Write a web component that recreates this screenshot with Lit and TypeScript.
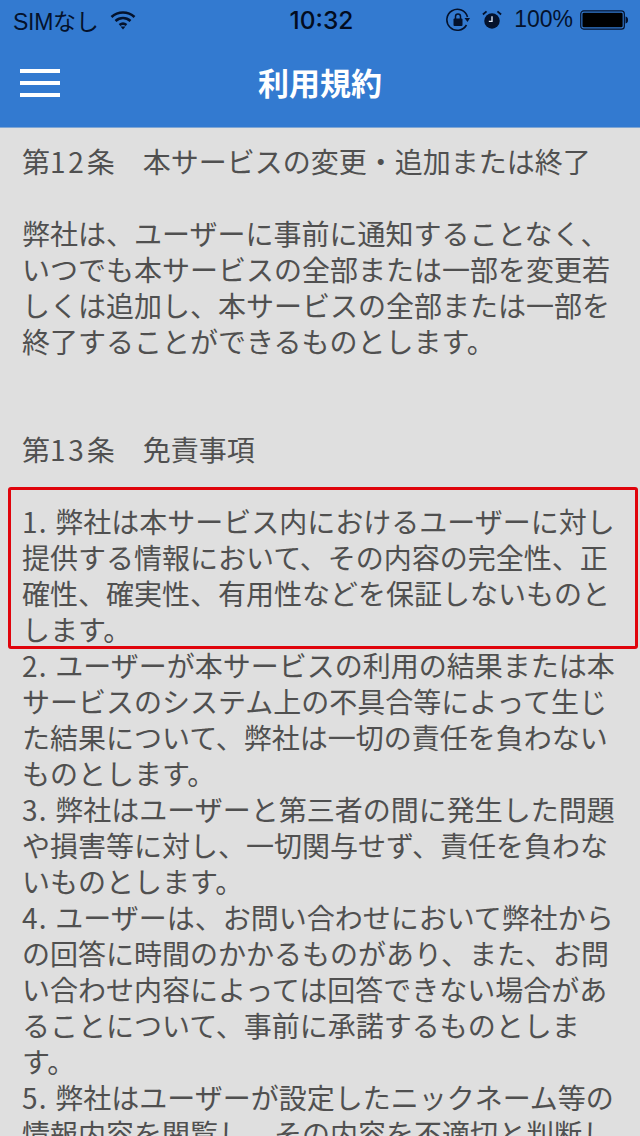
import { LitElement, html, css } from "lit";
import { customElement } from "lit/decorators.js";

const LINES = [
  "第12条　本サービスの変更・追加または終了",
  "",
  "弊社は、ユーザーに事前に通知することなく、",
  "いつでも本サービスの全部または一部を変更若",
  "しくは追加し、本サービスの全部または一部を",
  "終了することができるものとします。",
  "",
  "",
  "第13条　免責事項",
  "",
  "1. 弊社は本サービス内におけるユーザーに対し",
  "提供する情報において、その内容の完全性、正",
  "確性、確実性、有用性などを保証しないものと",
  "します。",
  "2. ユーザーが本サービスの利用の結果または本",
  "サービスのシステム上の不具合等によって生じ",
  "た結果について、弊社は一切の責任を負わない",
  "ものとします。",
  "3. 弊社はユーザーと第三者の間に発生した問題",
  "や損害等に対し、一切関与せず、責任を負わな",
  "いものとします。",
  "4. ユーザーは、お問い合わせにおいて弊社から",
  "の回答に時間のかかるものがあり、また、お問",
  "い合わせ内容によっては回答できない場合があ",
  "ることについて、事前に承諾するものとしま",
  "す。",
  "5. 弊社はユーザーが設定したニックネーム等の",
  "情報内容を閲覧し、その内容を不適切と判断し",
];

const renderLine = (l: string) =>
  l.split(/([0-9]+\.? ?)/).map((part, i) =>
    i % 2
      ? html`<span class=${part.length === 2 ? "num wide" : "num"}>${part}</span>`
      : part
  );

@customElement("app-root")
export class AppRoot extends LitElement {
  static styles = css`
    :host {
      display: block;
      position: relative;
      width: 640px;
      height: 1136px;
      overflow: hidden;
      background: #dfdfdf;
      font-family: "Noto Sans CJK JP", "Liberation Sans", sans-serif;
    }
    .head {
      height: 127px;
      background: #337ad0;
      border-bottom: 1px solid #7fa6d4;
      display: flex;
      flex-direction: column;
    }
    .status {
      height: 39px;
      display: flex;
      align-items: center;
      padding: 0 11px 0 13px;
      color: #04122c;
      font-family: "Liberation Sans", "Noto Sans CJK JP", sans-serif;
      font-size: 23px;
      position: relative;
    }
    .left, .right {
      display: flex;
      align-items: center;
    }
    .left { gap: 12px; }
    .right { margin-left: auto; gap: 12px; }
    .sim { letter-spacing: -0.3px; }
    .time {
      position: absolute;
      left: 3px;
      right: 0;
      text-align: center;
      font-family: "Inter", "Liberation Sans", sans-serif;
      font-weight: 500;
      font-size: 24.500px;
      color: #020c20;
    }
    .nav {
      flex: 1;
      display: flex;
      align-items: center;
      position: relative;
      padding: 0 20px;
    }
    .menu {
      display: flex;
      flex-direction: column;
      gap: 8px;
      width: 40px;
    }
    .menu span {
      height: 4px;
      background: #fff;
    }
    .title {
      position: absolute;
      left: 0;
      right: 0;
      top: 23px;
      text-align: center;
      font-size: 31px;
      line-height: 40px;
      font-weight: 700;
      color: #fff;
    }
    .body {
      padding: 15px 0 0 22px;
      font-size: 28px;
      line-height: 36px;
      color: #505050;
      white-space: nowrap;
    }
    .line { height: 36px; }
    .num { letter-spacing: 1.200px; }
    .num.wide { letter-spacing: 2.800px; }
    .mark {
      position: absolute;
      left: 8px;
      top: 487px;
      width: 630px;
      height: 162px;
      box-sizing: border-box;
      border: 3px solid #e0040c;
      border-radius: 3px;
    }
  `;

  render() {
    return html`
      <div class="head">
        <div class="status">
          <div class="left">
            <span class="sim">SIMなし</span>
            <svg width="26" height="20" viewBox="0 0 26 20" fill="none" stroke="#04122c" stroke-width="2.6">
              <path d="M1.500 7 C8 1 18 1 24.500 7" />
              <path d="M5.500 11 C10 7 16 7 20.500 11" />
              <path d="M9.500 15 C11.500 13.500 14.500 13.500 16.500 15" />
              <path d="M10.500 16.500 L13 19.500 L15.500 16.500 Z" fill="#04122c" stroke="none" />
            </svg>
          </div>
          <div class="time">10:32</div>
          <div class="right">
            <svg width="24" height="24" viewBox="0 0 24 24" fill="none">
              <path d="M20.500 17 A10.500 10.500 0 1 1 21.500 9" stroke="#04122c" stroke-width="1.600" />
              <path d="M18.500 10 L24 10 L21.500 14 Z" fill="#04122c" />
              <rect x="7.500" y="10.500" width="9" height="7.500" rx="1" fill="#04122c" />
              <path d="M9.500 11 V8.500 A2.500 2.500 0 0 1 14.500 8.500 V11" stroke="#04122c" stroke-width="1.500" />
            </svg>
            <svg width="20" height="20" viewBox="0 0 22 22">
              <circle cx="11" cy="12" r="8.500" fill="#04122c" />
              <path d="M1 5 L5 1.500 M21 5 L17 1.500" stroke="#04122c" stroke-width="2" />
              <path d="M11 7 V12.500 H7.500" stroke="#dfe8f5" stroke-width="1.500" fill="none" />
            </svg>
            <span>100%</span>
            <svg width="49" height="20" viewBox="0 0 50 20" style="margin-left:-5px">
              <rect x="0.750" y="0.750" width="44.500" height="18.500" rx="3" fill="none" stroke="#04122c" stroke-width="1.200" />
              <rect x="2.500" y="2.500" width="41" height="15" rx="1.500" fill="#000" />
              <path d="M46.500 6.500 C48.500 7 49 8 49 10 C49 12 48.500 13 46.500 13.500 Z" fill="#04122c" />
            </svg>
          </div>
        </div>
        <div class="nav">
          <div class="menu"><span></span><span></span><span></span></div>
          <div class="title">利用規約</div>
        </div>
      </div>
      <div class="body">
        ${LINES.map((l) => html`<div class="line">${renderLine(l)}</div>`)}
      </div>
      <div class="mark"></div>
    `;
  }
}
